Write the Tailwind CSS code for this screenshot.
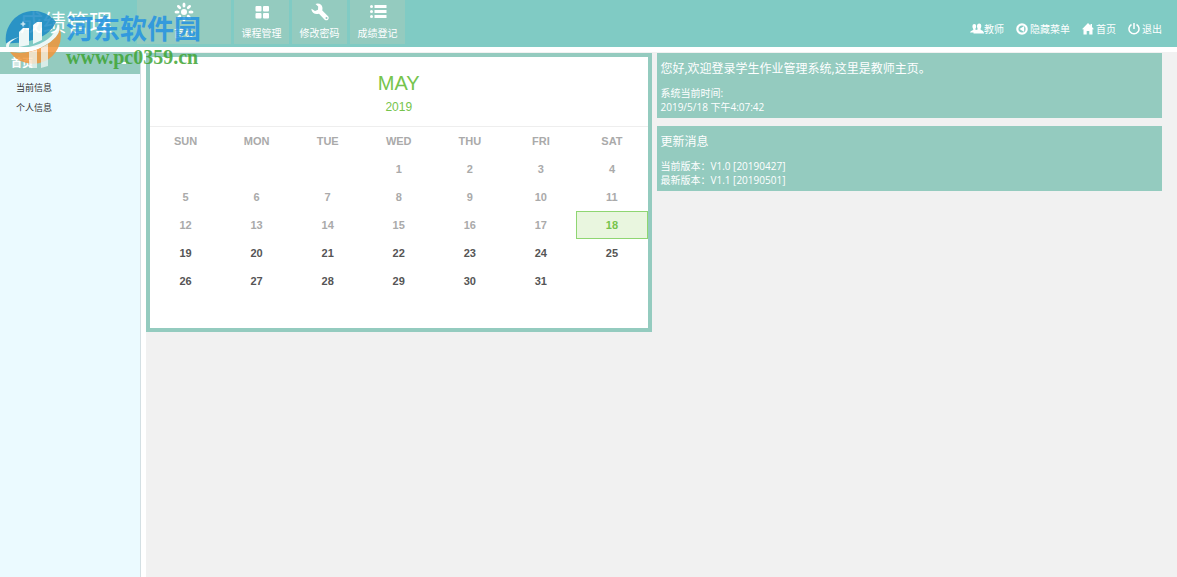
<!DOCTYPE html>
<html lang="zh-CN">
<head>
<meta charset="utf-8">
<title>成绩管理</title>
<script src="https://cdn.jsdelivr.net/npm/@tailwindcss/browser@4"></script>
</head>
<body class="relative flex min-h-screen flex-col overflow-x-hidden bg-white font-['Open_Sans','Noto_Sans_CJK_SC',sans-serif] text-[10px] leading-[14px] text-white">
<header class="flex h-[47px] shrink-0 bg-[#80cbc4]">
  <h1 class="w-[137px] shrink-0 pl-5 pt-2 text-[23px] leading-7">成绩管理</h1>
  <nav class="flex h-11 gap-[3px]">
    <a href="#" class="flex w-[94px] flex-col items-center gap-1 bg-[#94cbbf] pt-0.5">
      <svg class="size-5" viewBox="0 0 20 20" fill="currentColor"><circle cx="10" cy="10" r="3"/><g id="petals"><ellipse cx="10" cy="3" rx="1.500" ry="2.500"/><ellipse cx="10" cy="17" rx="1.500" ry="2.500"/><ellipse cx="3" cy="10" rx="2.500" ry="1.500"/><ellipse cx="17" cy="10" rx="2.500" ry="1.500"/></g><use href="#petals" transform="rotate(45 10 10)"/></svg>
      <span>首页</span>
    </a>
    <a href="#" class="flex w-[55px] flex-col items-center gap-1 bg-[#94cbbf] pt-0.5">
      <svg class="size-5" viewBox="0 0 20 20" fill="currentColor"><rect x="3.500" y="4" width="6" height="5.500" rx="1"/><rect x="11" y="4" width="6" height="5.500" rx="1"/><rect x="3.500" y="11" width="6" height="5.500" rx="1"/><rect x="11" y="11" width="6" height="5.500" rx="1"/></svg>
      <span>课程管理</span>
    </a>
    <a href="#" class="flex w-[55px] flex-col items-center gap-1 bg-[#94cbbf] pt-0.5">
      <svg class="size-5" viewBox="0 0 20 20" fill="currentColor"><path d="M7.500 1.500 Q12 1.500 12.500 6 L12.300 8.500 L18.300 14.500 Q19.500 16 18 17.700 Q16.300 19 14.700 17.700 L9 11.700 Q3 13 1.500 8 L1.500 6.800 L5 9 L8 7.800 L8.200 4.500 L5.500 2 Z"/><circle cx="16.500" cy="16" r="1" fill="#94cbbf"/></svg>
      <span>修改密码</span>
    </a>
    <a href="#" class="flex w-[55px] flex-col items-center gap-1 bg-[#94cbbf] pt-0.5">
      <svg class="size-5" viewBox="0 0 20 20" fill="currentColor"><path d="M6.500 3h12v3h-12zM6.500 8h12v3h-12zM6.500 13h12v3h-12z"/><circle cx="3.500" cy="4.500" r="1.500"/><circle cx="3.500" cy="9.500" r="1.500"/><circle cx="3.500" cy="14.500" r="1.500"/></svg>
      <span>成绩登记</span>
    </a>
  </nav>
  <div class="ml-auto flex items-center gap-3 pr-[15px] pt-2.5">
    <a href="#" class="flex items-center"><svg class="h-3 w-3.5" viewBox="0 0 14 12" fill="currentColor"><path d="M0 9.500Q0 8 3 7Q3.800 6.500 3 5.500Q2.400 4.500 2.400 3Q2.500 1 4.300 1Q6.200 1 6.200 3Q6.200 4.500 5.500 5.500Q5 6.500 6 7L7.500 6.500Q8 6.200 7.400 5.200Q6.900 4 7 2.700Q7.200.5 9.200.5Q11.200.5 11.300 2.700Q11.300 4.200 10.700 5.300Q10.200 6.500 11 7Q14 8 14 10.500H3.500V9.500Z"/></svg>教师</a>
    <a href="#" class="flex items-center gap-0.5"><svg class="size-3" viewBox="0 0 12 12"><circle cx="6" cy="6" r="4.700" fill="none" stroke="currentColor" stroke-width="2.200"/><path d="M8.200 3v6L3.500 6z" fill="currentColor"/></svg>隐藏菜单</a>
    <a href="#" class="flex items-center gap-0.5"><svg class="size-3" viewBox="0 0 12 12" fill="currentColor"><path d="M6 0L8.500 2.500V1H10V4L12 6.300H10.500V11.500H7.300V8H4.700V11.500H1.500V6.300H0z"/></svg>首页</a>
    <a href="#" class="flex items-center gap-0.5"><svg class="size-3" viewBox="0 0 12 12" fill="none" stroke="currentColor" stroke-width="1.500"><path d="M3.500 1.500A5 5 0 1 0 8.500 1.500M6 0v6"/></svg>退出</a>
  </div>
</header>
<div class="mt-[5px] flex grow">
  <aside class="mr-[5px] w-[141px] shrink-0 border-r border-[#d3dfe3] bg-[#ebfaff]">
    <h2 class="flex h-[22px] items-center justify-between bg-[#94cbbf] pl-[11px] pr-3.5 text-[11px] font-bold"><span>首页</span><span class="h-0.5 w-1.5 bg-white"></span></h2>
    <ul class="pl-4 pt-1 text-[9px] leading-5 text-[#333]">
      <li><a href="#">当前信息</a></li>
      <li><a href="#">个人信息</a></li>
    </ul>
  </aside>
  <main class="grid min-w-0 grow grid-cols-2 items-start gap-[5px] bg-[#f1f1f1] pr-[15px] pt-px">
    <section class="border-4 border-[#94cbbf] bg-white pb-[33px] font-['Liberation_Sans',sans-serif]">
      <div class="h-[70px] border-b border-[#eeeeee] pt-3.5 text-center text-[#76c44c]">
        <h2 class="text-xl leading-6">MAY</h2>
        <p class="text-xs leading-6">2019</p>
      </div>
      <table class="w-full table-fixed border-collapse text-center text-[11px] font-bold text-[#aaa]">
        <thead><tr class="h-7"><th>SUN</th><th>MON</th><th>TUE</th><th>WED</th><th>THU</th><th>FRI</th><th>SAT</th></tr></thead>
        <tbody>
        <tr class="h-7"><td></td><td></td><td></td><td>1</td><td>2</td><td>3</td><td>4</td></tr>
        <tr class="h-7"><td>5</td><td>6</td><td>7</td><td>8</td><td>9</td><td>10</td><td>11</td></tr>
        <tr class="h-7"><td>12</td><td>13</td><td>14</td><td>15</td><td>16</td><td>17</td><td class="p-0"><div class="flex h-7 items-center justify-center border border-[#8fd672] bg-[#e9f6df] text-[#76c44c]">18</div></td></tr>
        <tr class="h-7 text-[#555]"><td>19</td><td>20</td><td>21</td><td>22</td><td>23</td><td>24</td><td>25</td></tr>
        <tr class="h-7 text-[#555]"><td>26</td><td>27</td><td>28</td><td>29</td><td>30</td><td>31</td><td></td></tr>
        </tbody>
      </table>
    </section>
    <div class="flex min-w-0 flex-col gap-2">
      <section class="bg-[#94cbbf] px-1 pb-1 pt-1.5"><h2 class="mb-[7px] text-[12px] leading-5">您好,欢迎登录学生作业管理系统,这里是教师主页。</h2><p>系统当前时间:</p><p>2019/5/18 下午4:07:42</p></section>
      <section class="bg-[#94cbbf] px-1 pb-1 pt-1.5"><h2 class="mb-[7px] text-[12px] leading-5">更新消息</h2><p>当前版本：V1.0 [20190427]</p><p>最新版本：V1.1 [20190501]</p></section>
    </div>
  </main>
</div>
<div class="pointer-events-none absolute left-[5px] top-[11px] flex gap-1 opacity-85">
  <svg class="h-[57px] w-[57px]" viewBox="0 0 57 57">
    <path d="M1 32A28 28 0 0 1 51 11Q44 26 24 30Q10 33 1 32Z" fill="#1c8ac6"/>
    <path d="M5 41Q22 44 37 36Q52 28 55 18A28 28 0 0 1 5 41Z" fill="#f3963a"/>
    <path d="M14 26Q3 31 4 36Q8 40 24 36Q48 31 53 13Q59 24 39 35Q22 44 5 40Q-1 37 2 32Q6 28 14 26Z" fill="#fff"/>
    <path d="M14 21L18 17H24V34L14 36ZM28 14L32 11H37V29L28 33Z" fill="#fff"/>
    <path d="M24 41L32 39V57H24ZM36 37L43 33V55L36 57ZM18 10L19 12L21 13L19 14L18 16L17 14L15 13L17 12Z" fill="#fff" opacity=".75"/>
  </svg>
  <div><p class="text-[27px] font-bold leading-9 text-[#2492e2]">河东软件园</p><p class="font-['Liberation_Serif',serif] text-xl font-bold leading-5 text-[#3fa535]">www.pc0359.cn</p></div>
</div>
</body>
</html>
